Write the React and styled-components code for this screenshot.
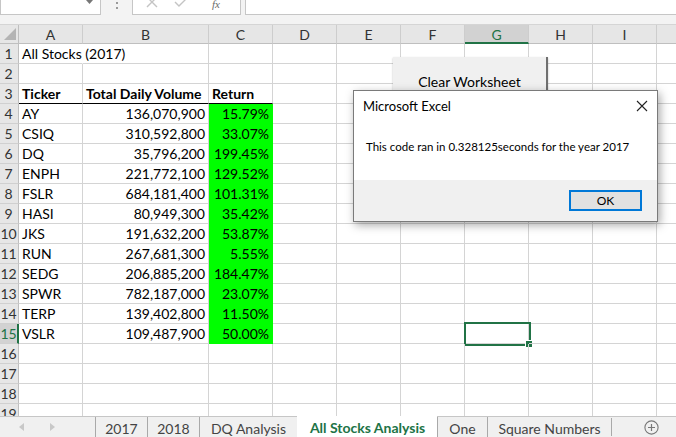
import React from 'react'
import styled, { createGlobalStyle } from 'styled-components'

const GlobalStyle = createGlobalStyle`
  html, body { margin: 0; padding: 0; background: #fff; }
  body { font-family: Lato, "Liberation Sans", sans-serif; overflow: hidden; }
  * { box-sizing: border-box; }
`

const GREEN = '#217346'
const GRID = '#d4d4d4'

const Page = styled.div`
  position: relative;
  width: 676px;
  height: 437px;
  display: flex;
  flex-direction: column;
  overflow: hidden;
  background: #fff;
`

const FormulaBar = styled.div`
  height: 25px;
  flex: none;
  display: flex;
  align-items: flex-start;
  background: #f3f3f3;
  border-bottom: 1px solid #d5d5d5;
`

const NameBox = styled.div`
  width: 101px;
  height: 15px;
  background: #fff;
  border: 1px solid #c6c6c6;
  border-top: none;
  display: flex;
  justify-content: flex-end;
  padding-right: 7px;
`

const Dots = styled.div`
  width: 31px;
  display: flex;
  justify-content: center;
  padding-top: 2px;
  span {
    display: block;
    width: 2px;
    height: 7px;
    border-top: 2px dotted #9a9a9a;
    border-bottom: 2px dotted #9a9a9a;
  }
`

const FuncBox = styled.div`
  width: 109px;
  height: 15px;
  background: #fff;
  border: 1px solid #c6c6c6;
  border-top: none;
  display: flex;
  align-items: flex-start;
  padding-left: 13px;
  gap: 16px;
  color: #bdbdbd;
`

const Fx = styled.span`
  font-family: "Liberation Serif", serif;
  font-style: italic;
  font-size: 11px;
  line-height: 8px;
  color: #6a6a6a;
  margin-left: 8px;
`

const FormulaInput = styled.div`
  flex: 1;
  margin-left: 4px;
  height: 15px;
  background: #fff;
  border: 1px solid #c6c6c6;
  border-top: none;
  border-right: none;
`

const Sheet = styled.div`
  flex: 1;
  overflow: hidden;
  background: #fff;
`

const Row = styled.div`
  display: flex;
  height: ${p => p.$h}px;
`

const RowHead = styled.div`
  width: 19px;
  flex: none;
  background: ${p => (p.$active ? '#d2d2d2' : '#e6e6e6')};
  color: ${p => (p.$active ? GREEN : '#333')};
  border-right: ${p => (p.$active ? `2px solid ${GREEN}` : '1px solid #bfbfbf')};
  border-bottom: 1px solid #d0d0d0;
  font-size: 14px;
  display: flex;
  align-items: center;
  justify-content: center;
  padding-right: ${p => (p.$active ? 0 : 1)}px;
`

const Corner = styled.div`
  width: 19px;
  flex: none;
  background: #e6e6e6;
  border-right: 1px solid #bfbfbf;
  border-bottom: 1px solid #bfbfbf;
  display: flex;
  align-items: flex-end;
  justify-content: flex-end;
  padding: 0 2px 3px 0;
`

const ColHead = styled.div`
  width: ${p => p.$w}px;
  flex: none;
  background: ${p => (p.$active ? '#d2d2d2' : '#e6e6e6')};
  color: ${p => (p.$active ? GREEN : '#333')};
  border-right: 1px solid #cdcdcd;
  border-bottom: ${p => (p.$active ? `2px solid ${GREEN}` : '1px solid #bfbfbf')};
  font-size: 14px;
  display: flex;
  align-items: center;
  justify-content: center;
  padding-top: 1px;
`

const Cell = styled.div`
  position: relative;
  width: ${p => p.$w}px;
  flex: none;
  padding: 0 3px 1px 3px;
  font-size: 14px;
  color: #000;
  font-weight: ${p => (p.$bold ? 700 : 400)};
  background: ${p => (p.$fill ? '#00ff00' : 'transparent')};
  border-right: 1px solid ${p => (p.$fill ? '#00ff00' : p.$spill ? 'transparent' : GRID)};
  border-bottom: 1px solid ${p => (p.$under ? '#000' : p.$fill ? '#00ff00' : GRID)};
  display: flex;
  align-items: flex-end;
  justify-content: ${p => (p.$right ? 'flex-end' : 'flex-start')};
  white-space: nowrap;
`

const Selection = styled.div`
  position: absolute;
  left: -1px;
  top: -2px;
  right: -3px;
  bottom: -3px;
  border: 2px solid ${GREEN};
  &::after {
    content: '';
    position: absolute;
    right: -4px;
    bottom: -4px;
    width: 6px;
    height: 6px;
    background: ${GREEN};
    border: 1px solid #fff;
  }
`

const TabBar = styled.div`
  height: 21px;
  flex: none;
  display: flex;
  align-items: stretch;
  background: #f0f0f0;
  border-top: 1px solid #c6c6c6;
`

const Arrows = styled.div`
  width: 95px;
  display: flex;
  align-items: center;
  padding-left: 19px;
  gap: 24px;
`

const Tab = styled.div`
  width: ${p => p.$w}px;
  flex: none;
  display: flex;
  align-items: center;
  justify-content: center;
  font-size: 14px;
  color: ${p => (p.$active ? GREEN : '#444')};
  font-weight: ${p => (p.$active ? 700 : 400)};
  background: ${p => (p.$active ? '#fff' : 'transparent')};
  margin-top: ${p => (p.$active ? -1 : 0)}px;
  border-left: 1px solid ${p => (p.$active ? '#fff' : '#a9a9a9')};
  white-space: nowrap;
  padding-top: 2px;
`

const TabSep = styled.div`
  width: 1px;
  margin: 1px 0;
  background: #a9a9a9;
`

const AddSheet = styled.div`
  flex: 1;
  display: flex;
  align-items: center;
  justify-content: flex-end;
  padding-right: 17px;
`

const ClearButton = styled.div`
  position: absolute;
  left: 393px;
  top: 57px;
  width: 155px;
  height: 50px;
  background: #f0f0f0;
  border-right: 2px solid #6f6f6f;
  box-shadow: 0 1px 2px rgba(0, 0, 0, 0.25);
  display: flex;
  justify-content: center;
  padding-top: 16px;
  font-size: 14px;
  color: #000;
`

const Dialog = styled.div`
  position: absolute;
  left: 353px;
  top: 90px;
  width: 305px;
  height: 132px;
  background: #fff;
  border: 1px solid #7a7a7a;
  box-shadow: 2px 3px 9px rgba(0, 0, 0, 0.35);
  display: flex;
  flex-direction: column;
  font-family: Lato, "Liberation Sans", sans-serif;
  font-size: 11.5px;
  color: #000;
`

const DialogTitle = styled.div`
  height: 31px;
  display: flex;
  align-items: center;
  justify-content: space-between;
  padding: 0 9px 2px 9px;
  font-size: 13px;
`

const DialogBody = styled.div`
  flex: 1;
  padding: 18px 0 0 12px;
`

const DialogFooter = styled.div`
  height: 41px;
  background: #f0f0f0;
  display: flex;
  justify-content: flex-end;
  align-items: center;
  padding: 0 15px 1px 0;
`

const OkButton = styled.div`
  width: 73px;
  height: 21px;
  border: 2px solid #0078d7;
  background: #e1e1e1;
  display: flex;
  align-items: center;
  justify-content: center;
  font-size: 12px;
`

const cols = [
  { id: 'A', w: 64 },
  { id: 'B', w: 126 },
  { id: 'C', w: 64 },
  { id: 'D', w: 64 },
  { id: 'E', w: 64 },
  { id: 'F', w: 64 },
  { id: 'G', w: 64 },
  { id: 'H', w: 64 },
  { id: 'I', w: 64 },
  { id: 'J', w: 64 },
]

const stocks = [
  ['AY', '136,070,900', '15.79%'],
  ['CSIQ', '310,592,800', '33.07%'],
  ['DQ', '35,796,200', '199.45%'],
  ['ENPH', '221,772,100', '129.52%'],
  ['FSLR', '684,181,400', '101.31%'],
  ['HASI', '80,949,300', '35.42%'],
  ['JKS', '191,632,200', '53.87%'],
  ['RUN', '267,681,300', '5.55%'],
  ['SEDG', '206,885,200', '184.47%'],
  ['SPWR', '782,187,000', '23.07%'],
  ['TERP', '139,402,800', '11.50%'],
  ['VSLR', '109,487,900', '50.00%'],
]

// title in A1 runs over into B1, so A1 hides its right gridline
const cellFor = (r, c) => {
  if (r === 1 && c === 0) return { text: 'All Stocks (2017)', spill: true }
  if (r === 3) {
    const h = ['Ticker', 'Total Daily Volume', 'Return'][c]
    if (h) return { text: h, bold: true, under: true }
  }
  const s = stocks[r - 4]
  if (s && c < 3) {
    return { text: s[c], right: c > 0, fill: c === 2 }
  }
  return {}
}

const rows = Array.from({ length: 19 }, (_, i) => i + 1)

const Cross = ({ size = 12, color = '#222', w = 1.2 }) => (
  <svg width={size} height={size} viewBox="0 0 12 12">
    <path d="M1 1 L11 11 M11 1 L1 11" stroke={color} strokeWidth={w} fill="none" />
  </svg>
)

const App = () => {
  return (
    <Page>
      <GlobalStyle />
      <FormulaBar>
        <NameBox>
          <svg width="7" height="5" viewBox="0 0 7 5">
            <path d="M0 0 L7 0 L3.5 4 Z" fill="#777" />
          </svg>
        </NameBox>
        <Dots><span /></Dots>
        <FuncBox>
          <svg width="12" height="9" viewBox="0 0 12 9" style={{ marginTop: -1 }}>
            <path d="M1 -2 L11 8 M11 -2 L1 8" stroke="#c4c4c4" strokeWidth="1.4" fill="none" />
          </svg>
          <svg width="14" height="9" viewBox="0 0 14 9" style={{ marginTop: -1 }}>
            <path d="M1 3 L5 7 L13 -1" stroke="#c4c4c4" strokeWidth="1.4" fill="none" />
          </svg>
          <Fx>fx</Fx>
        </FuncBox>
        <FormulaInput />
      </FormulaBar>

      <Sheet>
        <Row $h={19}>
          <Corner>
            <svg width="12" height="12" viewBox="0 0 12 12">
              <path d="M12 0 L12 12 L0 12 Z" fill="#b4b4b4" />
            </svg>
          </Corner>
          {cols.map(c => (
            <ColHead key={c.id} $w={c.w} $active={c.id === 'G'}>{c.id}</ColHead>
          ))}
        </Row>
        {rows.map(r => (
          <Row key={r} $h={20}>
            <RowHead $active={r === 15}>{r}</RowHead>
            {cols.map((c, ci) => {
              const d = cellFor(r, ci)
              return (
                <Cell
                  key={c.id}
                  $w={c.w}
                  $bold={d.bold}
                  $under={d.under}
                  $right={d.right}
                  $fill={d.fill}
                  $spill={d.spill}
                >
                  {d.text}
                  {r === 15 && c.id === 'G' && <Selection />}
                </Cell>
              )
            })}
          </Row>
        ))}
      </Sheet>

      <TabBar>
        <Arrows>
          <svg width="6" height="8" viewBox="0 0 6 8">
            <path d="M5 0 L5 8 L0 4 Z" fill="#c8c8c8" />
          </svg>
          <svg width="6" height="8" viewBox="0 0 6 8">
            <path d="M1 0 L1 8 L6 4 Z" fill="#c8c8c8" />
          </svg>
        </Arrows>
        <Tab $w={52}>2017</Tab>
        <Tab $w={52}>2018</Tab>
        <Tab $w={98}>DQ Analysis</Tab>
        <Tab $w={140} $active>All Stocks Analysis</Tab>
        <Tab $w={50}>One</Tab>
        <Tab $w={124}>Square Numbers</Tab>
        <TabSep />
        <AddSheet>
          <svg width="15" height="15" viewBox="0 0 15 15">
            <circle cx="7.5" cy="7.5" r="6.6" stroke="#777" strokeWidth="1.1" fill="none" />
            <path d="M7.5 4 L7.5 11 M4 7.5 L11 7.5" stroke="#777" strokeWidth="1.2" />
          </svg>
        </AddSheet>
      </TabBar>

      <ClearButton>Clear Worksheet</ClearButton>

      <Dialog>
        <DialogTitle>
          <span>Microsoft Excel</span>
          <Cross size={12} color="#222" w={1.1} />
        </DialogTitle>
        <DialogBody>This code ran in 0.328125seconds for the year 2017</DialogBody>
        <DialogFooter>
          <OkButton>OK</OkButton>
        </DialogFooter>
      </Dialog>
    </Page>
  )
}

export default App
